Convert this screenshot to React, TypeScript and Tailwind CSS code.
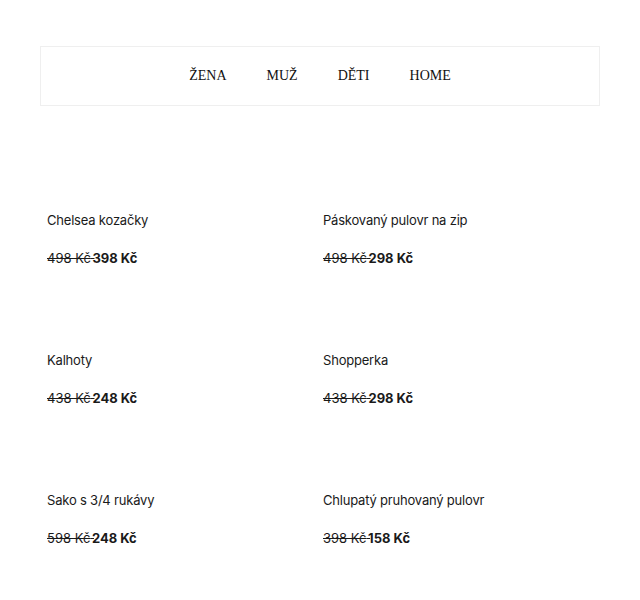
const products = [
  { name: "Chelsea kozačky", old: "498 Kč", price: "398 Kč" },
  { name: "Páskovaný pulovr na zip", old: "498 Kč", price: "298 Kč" },
  { name: "Kalhoty", old: "438 Kč", price: "248 Kč" },
  { name: "Shopperka", old: "438 Kč", price: "298 Kč" },
  { name: "Sako s 3/4 rukávy", old: "598 Kč", price: "248 Kč" },
  { name: "Chlupatý pruhovaný pulovr", old: "398 Kč", price: "158 Kč" },
];

const App = () => {
  return (
    <div className="min-h-[600px] bg-white px-10 pt-[46px]">
      {/* menu */}
      <nav className="flex h-[60px] items-center justify-center gap-[40px] border border-[#efefef] pb-[1px] font-['Liberation_Serif',serif] text-[14px] text-[#111]">
        <a href="#">ŽENA</a>
        <a href="#">MUŽ</a>
        <a href="#">DĚTI</a>
        <a href="#">HOME</a>
      </nav>

      {/* products */}
      <div className="mt-[22px] grid grid-cols-[276px_276px] px-[7px] font-['Inter',sans-serif] text-[#1a1a1a]">
        {products.map((p) => (
          <div key={p.name} className="flex flex-col">
            <div className="h-[82px]" />
            <p className="text-[13px] leading-[20px] tracking-[-0.2px]">{p.name}</p>
            <p className="mt-[18px] text-[13px] leading-[20px]">
              <span className="line-through">{p.old} </span>
              <span className="-ml-[2px] font-bold">{p.price}</span>
            </p>
          </div>
        ))}
      </div>
    </div>
  );
};

export default App;
